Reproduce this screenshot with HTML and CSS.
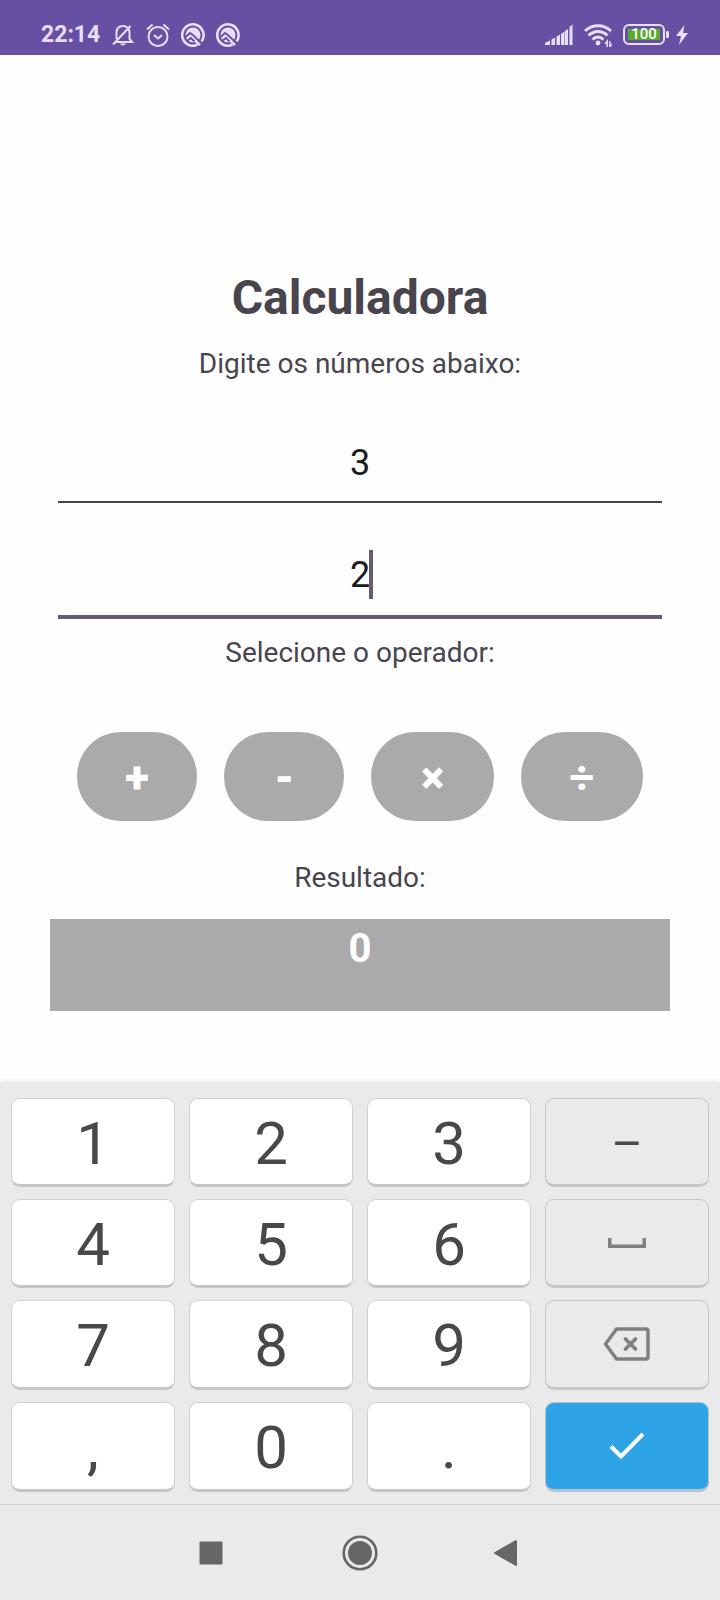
FILE: index.html
```html
<!DOCTYPE html>
<html lang="pt-BR">
<head>
<meta charset="utf-8">
<meta name="viewport" content="width=device-width, initial-scale=1">
<title>Calculadora</title>
<link rel="stylesheet" href="styles.css">
</head>
<body>
<header class="status">
  <div class="status-group">
    <span class="clock">22:14</span>
    <svg width="24" height="24" viewBox="0 0 24 24" fill="none" stroke="currentColor" stroke-width="2">
      <path d="M5.500 16V10C5.500 5 8 3 12 3s6.500 3 6.500 7v6l2.500 3H4"/><path d="M2 21.500 19.500 3"/><path d="M9 20.500h6c-1 2.500-5 2.500-6 0z" fill="currentColor" stroke="none"/>
    </svg>
    <svg width="24" height="24" viewBox="0 0 24 24" fill="none" stroke="currentColor" stroke-width="2">
      <circle cx="12" cy="13.500" r="9.500"/><path d="M8 12l4 3.500 4-3.500M1 6.500l5.500-5M23 6.500l-5.500-5"/>
    </svg>
    <svg width="24" height="24" viewBox="0 0 24 24" fill="none" stroke="currentColor" stroke-width="2.600">
      <path d="M16.500 21.700A10.700 10.700 0 1 1 20.500 18.400"/><circle cx="12" cy="12" r="7.500" fill="currentColor" stroke="none"/><path d="M4 14.500 9 10l3.500 2.500L21 21M6 18l4-3 5 5" stroke="#6750a3" stroke-width="1.800"/><path d="M14 17.500l5 4.500"/>
    </svg>
    <svg width="24" height="24" viewBox="0 0 24 24" fill="none" stroke="currentColor" stroke-width="2.600">
      <path d="M16.500 21.700A10.700 10.700 0 1 1 20.500 18.400"/><circle cx="12" cy="12" r="7.500" fill="currentColor" stroke="none"/><path d="M4 14.500 9 10l3.500 2.500L21 21M6 18l4-3 5 5" stroke="#6750a3" stroke-width="1.800"/><path d="M14 17.500l5 4.500"/>
    </svg>
  </div>
  <div class="status-group status-right">
    <svg width="28" height="22" viewBox="0 0 28 22" fill="currentColor">
      <path d="M0 21v-2l5-2.500V21zM6.500 21v-5.500l3.500-2V21zM11.500 21v-8.500l3.500-2V21zM16 21V10l3.500-2.500V21zM20 21V7l3-2v16zM24.500 21V3l3-2.500V21z"/>
    </svg>
    <svg width="28" height="24" viewBox="0 0 28 24" fill="none" stroke="currentColor" stroke-width="3">
      <path d="M1 8C8 1 20 1 27 8M4.500 12.500c5.500-5.500 13.500-5.500 19 0M8.500 16.500c3.500-3.500 7.500-3.500 11 0"/><circle cx="14" cy="20" r="2.400" fill="currentColor" stroke="none"/><path d="M23.200 24v-6l-2 3M25.800 18v6l2-3" stroke-width="1.400"/>
    </svg>
    <div class="battery"><span class="charge">100</span></div>
    <svg width="12" height="20" viewBox="0 0 12 20" fill="currentColor"><path d="M8.500 0 0 11h5L3 20 12 8H7z"/></svg>
  </div>
</header>

<main class="calc">
  <h1 class="title">Calculadora</h1>
  <p class="label">Digite os números abaixo:</p>
  <div class="field"><input class="number" type="text" inputmode="decimal" value="3" aria-label="Primeiro número"></div>
  <div class="field field-active"><input class="number" type="text" inputmode="decimal" value="2" aria-label="Segundo número"><span class="caret"></span></div>
  <p class="label">Selecione o operador:</p>
  <div class="operators">
    <button class="operator" type="button">+</button>
    <button class="operator" type="button">-</button>
    <button class="operator" type="button">×</button>
    <button class="operator operator-divide" type="button">÷</button>
  </div>
  <p class="label">Resultado:</p>
  <output class="result">0</output>
</main>

<section class="keyboard" aria-label="Teclado">
  <button class="key" type="button">1</button>
  <button class="key" type="button">2</button>
  <button class="key" type="button">3</button>
  <button class="key key-alt key-dash" type="button">–</button>
  <button class="key" type="button">4</button>
  <button class="key" type="button">5</button>
  <button class="key" type="button">6</button>
  <button class="key key-alt key-icon" type="button" aria-label="Espaço">
    <svg width="38" height="10" viewBox="0 0 38 10" fill="none" stroke="currentColor" stroke-width="3.500"><path d="M1.800 0v8.200h34.400V0"/></svg>
  </button>
  <button class="key" type="button">7</button>
  <button class="key" type="button">8</button>
  <button class="key" type="button">9</button>
  <button class="key key-alt key-icon" type="button" aria-label="Apagar">
    <svg width="48" height="34" viewBox="0 0 48 34" fill="none" stroke="currentColor" stroke-width="3.500" stroke-linejoin="round" stroke-linecap="round"><path d="M13.500 2H43q2 0 2 2v26q0 2-2 2H13.500L2.500 17z"/><path d="M22.500 12 32.500 22M32.500 12 22.500 22" stroke-width="3.800"/></svg>
  </button>
  <button class="key" type="button">,</button>
  <button class="key" type="button">0</button>
  <button class="key" type="button">.</button>
  <button class="key key-enter key-icon" type="button" aria-label="Concluir">
    <svg width="36" height="28" viewBox="0 0 36 28" fill="none" stroke="currentColor" stroke-width="4"><path d="M2 14.500 12 24.500 34 2"/></svg>
  </button>
</section>

<nav class="nav">
  <button class="nav-button" type="button" aria-label="Recentes"><svg width="36" height="36" viewBox="0 0 36 36"><rect x="6.500" y="6.500" width="23" height="23" rx="1" fill="currentColor"/></svg></button>
  <button class="nav-button" type="button" aria-label="Início"><svg width="36" height="36" viewBox="0 0 36 36"><circle cx="18" cy="18" r="16.300" fill="none" stroke="currentColor" stroke-width="2.600"/><circle cx="18" cy="18" r="12" fill="currentColor"/></svg></button>
  <button class="nav-button" type="button" aria-label="Voltar"><svg width="36" height="36" viewBox="0 0 36 36"><path d="M4 18 25 6v24z" fill="currentColor" stroke="currentColor" stroke-width="2" stroke-linejoin="round"/></svg></button>
</nav>
</body>
</html>
```
FILE: styles.css
```css
* { box-sizing: border-box; }
body {
  margin: 0;
  min-height: 100vh;
  display: flex;
  flex-direction: column;
  background: #fefefe;
  color: #49454f;
  font-family: Roboto, "Liberation Sans", sans-serif;
}
button { padding: 0; border: 0; font-family: inherit; }
svg { display: block; flex: none; }

.status {
  display: flex;
  justify-content: space-between;
  height: 55px;
  padding: 14px 32px 0 41px;
  background: #6750a3;
  color: #e9def8;
}
.status-group { display: flex; align-items: center; gap: 11px; height: 41px; }
.clock { font-size: 23px; font-weight: 700; }
.battery {
  position: relative;
  width: 42px;
  height: 21px;
  padding: 3px;
  border: 2px solid currentColor;
  border-radius: 6px;
}
.battery::after {
  content: "";
  position: absolute;
  right: -6px;
  top: 5px;
  width: 3px;
  height: 7px;
  border-radius: 1px;
  background: currentColor;
}
.charge {
  display: block;
  background: #57a82d;
  color: #fff;
  font-size: 15px;
  font-weight: 500;
  line-height: 11px;
  text-align: center;
}

.calc {
  flex: 1;
  display: flex;
  flex-direction: column;
  padding: 211px 50px 60px;
}
.title { margin: 0; font-size: 48px; line-height: 64px; text-align: center; }
.label { margin: 0; font-size: 28px; line-height: 40px; text-align: center; }
.title + .label { margin-top: 14px; }
.field {
  position: relative;
  margin: 54px 8px 0;
  padding-bottom: 13px;
  border-bottom: 2px solid #49454f;
}
.field-active { margin-top: 47px; padding-bottom: 15px; border-bottom: 4px solid #665b70; }
.field-active + .label { margin-top: 14px; }
.number {
  display: block;
  width: 100%;
  height: 50px;
  padding: 0;
  border: 0;
  outline: 0;
  background: none;
  color: #1c1b1f;
  font-family: inherit;
  font-size: 36px;
  text-align: center;
}
.caret {
  position: absolute;
  top: 0;
  left: calc(50% + 9px);
  width: 4px;
  height: 49px;
  background: #665b70;
}
.operators {
  display: grid;
  grid-template-columns: 60fr 60fr 61fr 61fr;
  gap: 27px;
  margin: 59px 27px 37px;
}
.operator {
  height: 89px;
  padding-top: 2px;
  border-radius: 44px;
  background: #aaa;
  color: #fff;
  font-size: 44px;
  font-weight: 900;
  line-height: 56px;
}
.operator-divide { font-weight: 700; }
.result {
  display: block;
  height: 92px;
  margin-top: 21px;
  padding-top: 6px;
  background: #aaa;
  color: #fff;
  font-size: 40px;
  font-weight: 700;
  line-height: 48px;
  text-align: center;
}

.keyboard {
  display: grid;
  grid-template-columns: repeat(4, 1fr);
  grid-template-rows: 89px 89px 90px 90px;
  gap: 12px 14px;
  padding: 16px 11px 12px;
  background: #eaeaea;
  box-shadow: 0 -1px 4px #e8e8e8;
}
.key {
  display: flex;
  align-items: center;
  justify-content: center;
  padding-top: 4px;
  border: 1px solid #d0d0d0;
  border-bottom: 3px solid #c6c6c6;
  border-radius: 9px;
  background: #fff;
  color: #484848;
  font-size: 60px;
  line-height: 70px;
}
.key-alt { border-color: #c6c6c6; background: #eaeaea; }
.key-alt svg { color: #808080; }
.key-icon { padding-top: 0; }
.key-dash { font-size: 48px; }
.key-enter { border-color: #b4c4cc; background: #2ea4e6; color: #fff; }

.nav {
  display: flex;
  align-items: center;
  justify-content: center;
  gap: 113px;
  height: 96px;
  border-top: 1px solid #d0d0d0;
  background: #eaeaea;
}
.nav-button { background: none; color: #666; }
```
